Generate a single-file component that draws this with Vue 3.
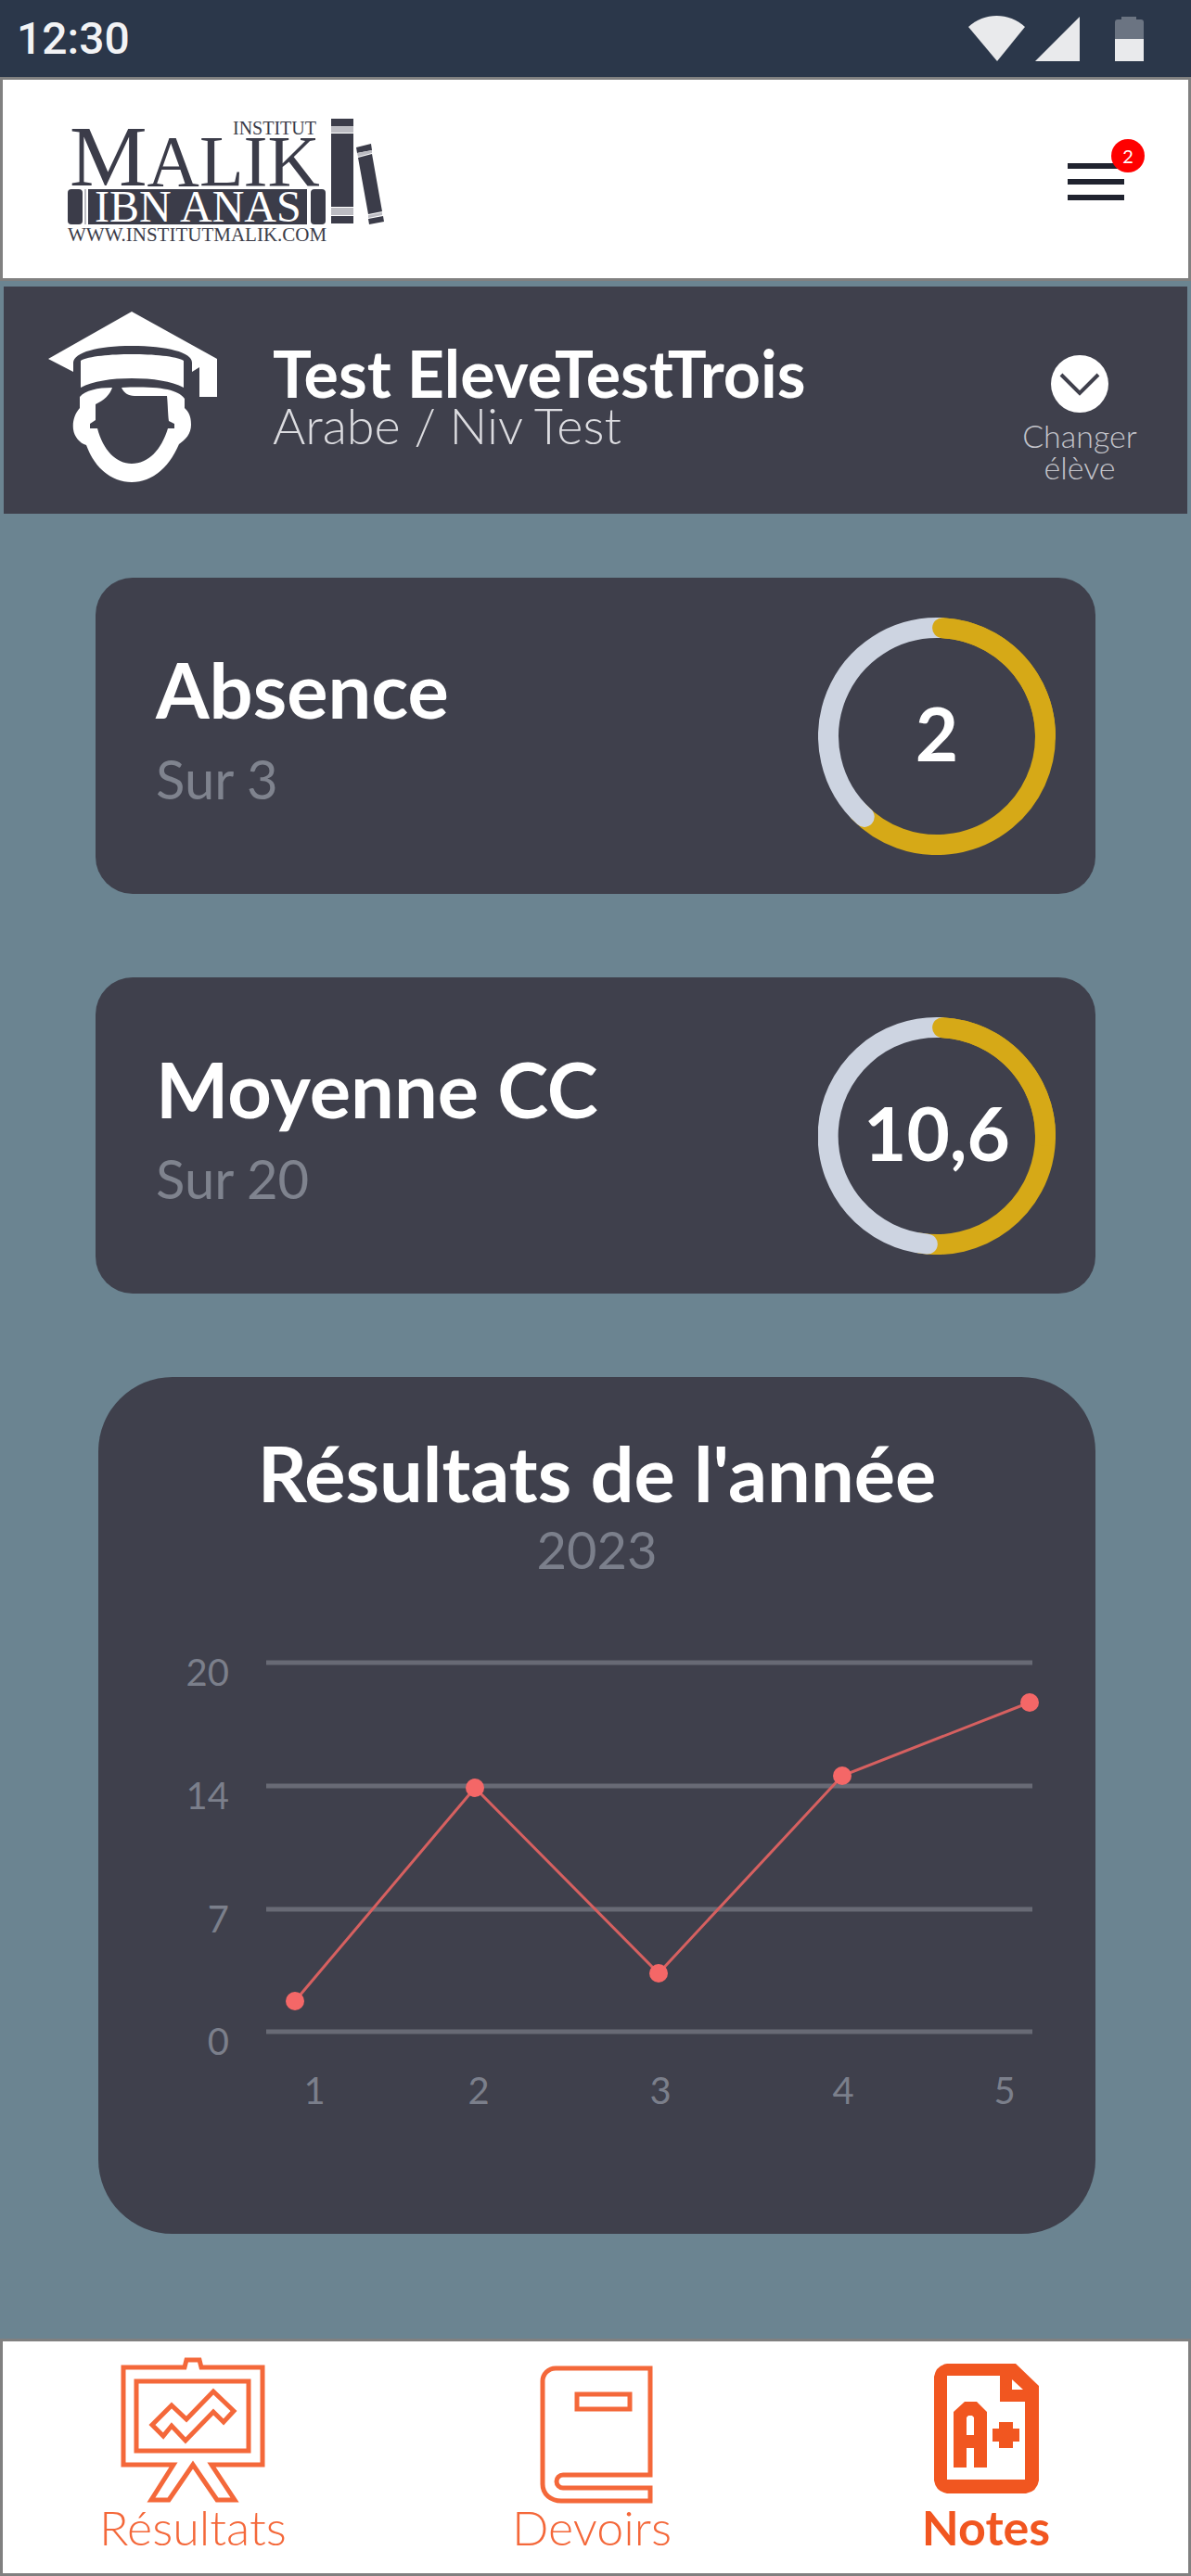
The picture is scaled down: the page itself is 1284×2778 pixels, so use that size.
<script setup>
const stats = [
  { title: 'Absence', scale: 'Sur 3', value: '2', degrees: 222 },
  { title: 'Moyenne CC', scale: 'Sur 20', value: '10,6', degrees: 185 },
]

const radius = 117
const at = (deg) => {
  const a = (deg * Math.PI) / 180
  return `${(128 + radius * Math.sin(a)).toFixed(1)} ${(128 - radius * Math.cos(a)).toFixed(1)}`
}
const arc = (from, to) =>
  `M${at(from)} A${radius} ${radius} 0 ${to - from > 180 ? 1 : 0} 1 ${at(to)}`

const rows = [
  { label: '20', y: 95 },
  { label: '14', y: 228 },
  { label: '7', y: 361 },
  { label: '0', y: 493 },
]
const columns = [
  { label: '1', x: 233 },
  { label: '2', x: 410 },
  { label: '3', x: 606 },
  { label: '4', x: 803 },
  { label: '5', x: 977 },
]
const points = [
  { x: 212, y: 460 },
  { x: 406, y: 230 },
  { x: 604, y: 430 },
  { x: 802, y: 217 },
  { x: 1004, y: 138 },
]
const line = points.map((p) => `${p.x},${p.y}`).join(' ')
</script>

<template>
  <div class="app">
    <div class="status">
      <span class="clock">12:30</span>
      <svg class="status-icons" viewBox="0 0 190 50" aria-hidden="true">
        <path d="M0 12C17-4 44-4 61 12L31 49Z" />
        <path d="M120 1V49H72Z" />
        <path class="dim" d="M158 25V7Q158 4 161 4H165V1H181V4H186Q189 4 189 7V25Z" />
        <path d="M158 25H189V49H158Z" />
      </svg>
    </div>

    <header class="header">
      <a class="logo" href="#" aria-label="Institut Malik Ibn Anas">
        <svg viewBox="0 0 344 138">
          <text x="178" y="18" font-size="20">INSTITUT</text>
          <text x="2" y="73" font-size="94">M<tspan font-size="78">ALIK</tspan></text>
          <rect x="0" y="77" width="16" height="38" rx="4" />
          <rect x="18" y="77" width="2" height="38" class="soft" />
          <rect x="22" y="77" width="236" height="38" />
          <rect x="262" y="77" width="16" height="38" rx="4" />
          <text x="29" y="112" font-size="48" class="on-bar">IBN ANAS</text>
          <text x="0" y="133" font-size="21">WWW.INSTITUTMALIK.COM</text>
          <path d="M284 1H308V9H284ZM284 17H308V96H284ZM284 106H308V114H284Z" />
          <path class="soft" d="M284 9H308V16H284ZM284 97H308V105H284Z" />
          <path d="M311 32L327 28L328 35L312 38ZM313 43L328 39L339 101L324 104ZM324 109L340 106L341 112L325 115Z" />
          <path class="soft" d="M312 38L328 35V38L313 42ZM324 105L339 102V105L324 108Z" />
        </svg>
      </a>
      <button class="menu" type="button" aria-label="Menu">
        <span class="bar"></span>
        <span class="bar"></span>
        <span class="bar"></span>
        <span class="badge">2</span>
      </button>
    </header>

    <section class="student">
      <svg class="avatar" viewBox="52 336 182 184" aria-hidden="true">
        <path d="M142 336L234 387V428H215V396L207 401V391C207 380 180 373 142 373C105 373 80 380 79 391V401L52 387Z" />
        <path d="M87 389C95 384 120 382 142 382C165 382 190 384 198 389V418C185 411 165 408 142 408C120 408 100 411 87 418Z" />
        <path d="M86 428V440C80 447 78 455 79 463C80 471 86 478 93 480C103 507 122 520 142 520C162 520 181 507 193 479C200 474 206 468 206 458C206 448 203 444 199 440V430C193 421 175 416 131 418C133 423 138 427 145 427H180C181 437 181 447 182 454L188 457V462H181C174 485 160 500 142 500C125 500 111 485 105 462H97V457L103 453V436C112 432 119 425 121 418C105 418 92 421 86 428Z" />
      </svg>
      <div class="who">
        <h1>Test EleveTestTrois</h1>
        <p>Arabe / Niv Test</p>
      </div>
      <button class="change" type="button">
        <svg viewBox="0 0 62 62" aria-hidden="true">
          <circle cx="31" cy="31" r="31" />
          <path d="M11 21L31 41L51 21" />
        </svg>
        <span>Changer élève</span>
      </button>
    </section>

    <main class="content">
      <section v-for="s in stats" :key="s.title" class="stat">
        <div class="stat-text">
          <h2>{{ s.title }}</h2>
          <p>{{ s.scale }}</p>
        </div>
        <div class="ring">
          <svg viewBox="0 0 256 256" aria-hidden="true">
            <path class="done" :d="arc(3, s.degrees + 4)" />
            <path class="rest" :d="arc(s.degrees, 362)" />
            <path class="done" :d="arc(3, 90)" />
          </svg>
          <strong>{{ s.value }}</strong>
        </div>
      </section>

      <section class="year">
        <h2>Résultats de l'année</h2>
        <p>2023</p>
        <svg class="chart" viewBox="0 3 1075 708" role="img" aria-label="Résultats">
          <g v-for="r in rows" :key="r.label">
            <line class="grid" x1="181" :y1="r.y" x2="1007" :y2="r.y" />
            <text class="row" x="141" :y="r.y + 25">{{ r.label }}</text>
          </g>
          <text v-for="c in columns" :key="c.label" class="column" :x="c.x" y="571">{{ c.label }}</text>
          <polyline :points="line" />
          <circle v-for="p in points" :key="p.x" :cx="p.x" :cy="p.y" r="10" />
        </svg>
      </section>
    </main>

    <nav class="tabs">
      <a href="#">
        <svg viewBox="0 0 160 160" aria-hidden="true">
          <path d="M59 117H5V12H71L73 4H87L89 12H155V117H100L125 155H106L80 117L54 155H35Z" />
          <rect x="19" y="27" width="121" height="75" />
          <path d="M36 74L57 53L73 68L102 38L124 59L113 71L102 60L72 91L57 75L48 86Z" />
        </svg>
        <span>Résultats</span>
      </a>
      <a href="#">
        <svg viewBox="-5 0 160 160" aria-hidden="true">
          <path d="M138 128V13H36A14 14 0 0 0 22 27V138C22 149 31 156 42 156H138V142H44A7 7 0 0 1 44 128Z" />
          <rect x="59" y="41" width="57" height="16" />
        </svg>
        <span>Devoirs</span>
      </a>
      <a href="#" class="active" aria-current="page">
        <svg viewBox="0 0 160 160" aria-hidden="true">
          <path fill-rule="evenodd" d="M38 8H112L137 32V134Q135 146 123 148H38Q26 146 24 134V22Q26 10 38 8ZM38 21V133H122V49H95V21ZM108 25V36H120Z" />
          <path fill-rule="evenodd" d="M45 120V60L57 49H70L81 60V120H67V99H59V120ZM59 66V85H67V66L65 64H61Z" />
          <path d="M94 71H109V78H116V92H109V99H94V92H87V78H94Z" />
        </svg>
        <span>Notes</span>
      </a>
    </nav>
  </div>
</template>

<style>
body {
  margin: 0;
  background: #6b8491;
}
</style>

<style scoped>
.app {
  display: flex;
  flex-direction: column;
  min-height: 100vh;
  background: #6b8491;
  color: #fff;
  font-family: Lato, "Open Sans", sans-serif;
}

h1,
h2,
p {
  margin: 0;
}

button {
  border: 0;
  padding: 0;
  background: none;
  color: inherit;
  font: inherit;
}

a {
  color: inherit;
  text-decoration: none;
}

svg {
  display: block;
}

.status {
  display: flex;
  align-items: center;
  justify-content: space-between;
  height: 83px;
  padding: 0 50px 0 18px;
  background: #2b374a;
}

.clock {
  color: #f2f3f5;
  font: 500 48px/83px Roboto, sans-serif;
}

.status-icons {
  width: 190px;
  height: 50px;
  fill: #e9eaec;
}

.status-icons .dim {
  fill: #6b7482;
}

.header {
  display: flex;
  align-items: center;
  justify-content: space-between;
  padding: 41px 69px 35px 70px;
  border: 3px solid #808080;
  background: #fff;
}

.logo svg {
  width: 344px;
  height: 138px;
  overflow: visible;
  fill: #3b3c49;
  font-family: "Liberation Serif", serif;
}

.logo .soft {
  fill: #bcbcc2;
}

.logo .on-bar {
  fill: #fff;
}

.menu {
  position: relative;
  display: flex;
  flex-direction: column;
  gap: 11px;
  width: 61px;
}

.bar {
  height: 6px;
  background: #20232f;
}

.badge {
  position: absolute;
  top: -26px;
  right: -22px;
  width: 36px;
  border-radius: 50%;
  background: #f00;
  color: #fff;
  font-size: 20px;
  line-height: 36px;
  text-align: center;
}

.student {
  display: flex;
  align-items: center;
  margin: 6px 4px 0;
  padding: 26px 54px 33px 48px;
  background: #3f404c;
}

.avatar {
  width: 182px;
  height: 184px;
  fill: #fff;
}

.who {
  flex: 1;
  padding: 8px 0 0 60px;
}

.who h1 {
  font-size: 70px;
  font-weight: 700;
  line-height: 54px;
}

.who p {
  color: #dcdce0;
  font-size: 54px;
  font-weight: 300;
  line-height: 60px;
}

.change {
  display: flex;
  flex-direction: column;
  align-items: center;
  gap: 8px;
  width: 124px;
  padding-top: 48px;
  color: #c3c4ca;
  font-size: 34px;
  font-weight: 300;
  line-height: 34px;
}

.change svg {
  width: 62px;
  height: 62px;
}

.change circle {
  fill: #fff;
}

.change path {
  fill: none;
  stroke: #3f404c;
  stroke-width: 4;
}

.content {
  display: flex;
  flex-direction: column;
  gap: 90px;
  padding: 69px 103px 112px;
}

.stat {
  display: flex;
  align-items: center;
  justify-content: space-between;
  padding: 43px 43px 42px 65px;
  border-radius: 40px;
  background: #3f404c;
}

.stat-text {
  padding-bottom: 8px;
}

h2 {
  font-size: 83px;
  font-weight: 700;
  line-height: 90px;
}

.stat p {
  padding-top: 10px;
  color: #7f838e;
  font-size: 58px;
  line-height: 84px;
}

.ring {
  display: grid;
  width: 256px;
  height: 256px;
  place-items: center;
}

.ring > * {
  grid-area: 1 / 1;
}

.ring path {
  fill: none;
  stroke-width: 22;
  stroke-linecap: round;
}

.ring .done {
  stroke: #d6a917;
}

.ring .rest {
  stroke: #cdd4e1;
}

.ring strong {
  padding-bottom: 8px;
  font-size: 80px;
  font-weight: 700;
}

.year {
  margin-left: 3px;
  padding-top: 58px;
  border-radius: 80px;
  background: #3f404c;
  text-align: center;
}

.year p {
  padding-top: 8px;
  color: #7b7f8b;
  font-size: 56px;
  line-height: 60px;
}

.chart {
  width: 100%;
}

.chart text {
  fill: #7b7f8b;
  font-size: 40px;
}

.chart .row {
  text-anchor: end;
}

.chart .column {
  text-anchor: middle;
}

.grid {
  stroke: #686a75;
  stroke-width: 5;
}

.chart polyline {
  fill: none;
  stroke: #d66060;
  stroke-width: 3;
}

.chart circle {
  fill: #f46767;
}

.tabs {
  display: grid;
  grid-template-columns: 41fr 45fr 40fr;
  margin-top: auto;
  padding: 16px 18px 26px 0;
  border: 3px solid #808080;
  background: #fff;
  color: #f4683a;
}

.tabs a {
  display: flex;
  flex-direction: column;
  align-items: center;
  font-size: 52px;
  font-weight: 300;
  line-height: 48px;
}

.tabs svg {
  width: 160px;
  height: 160px;
  fill: none;
  stroke: currentColor;
  stroke-width: 5;
}

.tabs .active {
  color: #f15620;
  font-weight: 700;
}

.tabs .active svg {
  fill: currentColor;
  stroke: none;
}
</style>
